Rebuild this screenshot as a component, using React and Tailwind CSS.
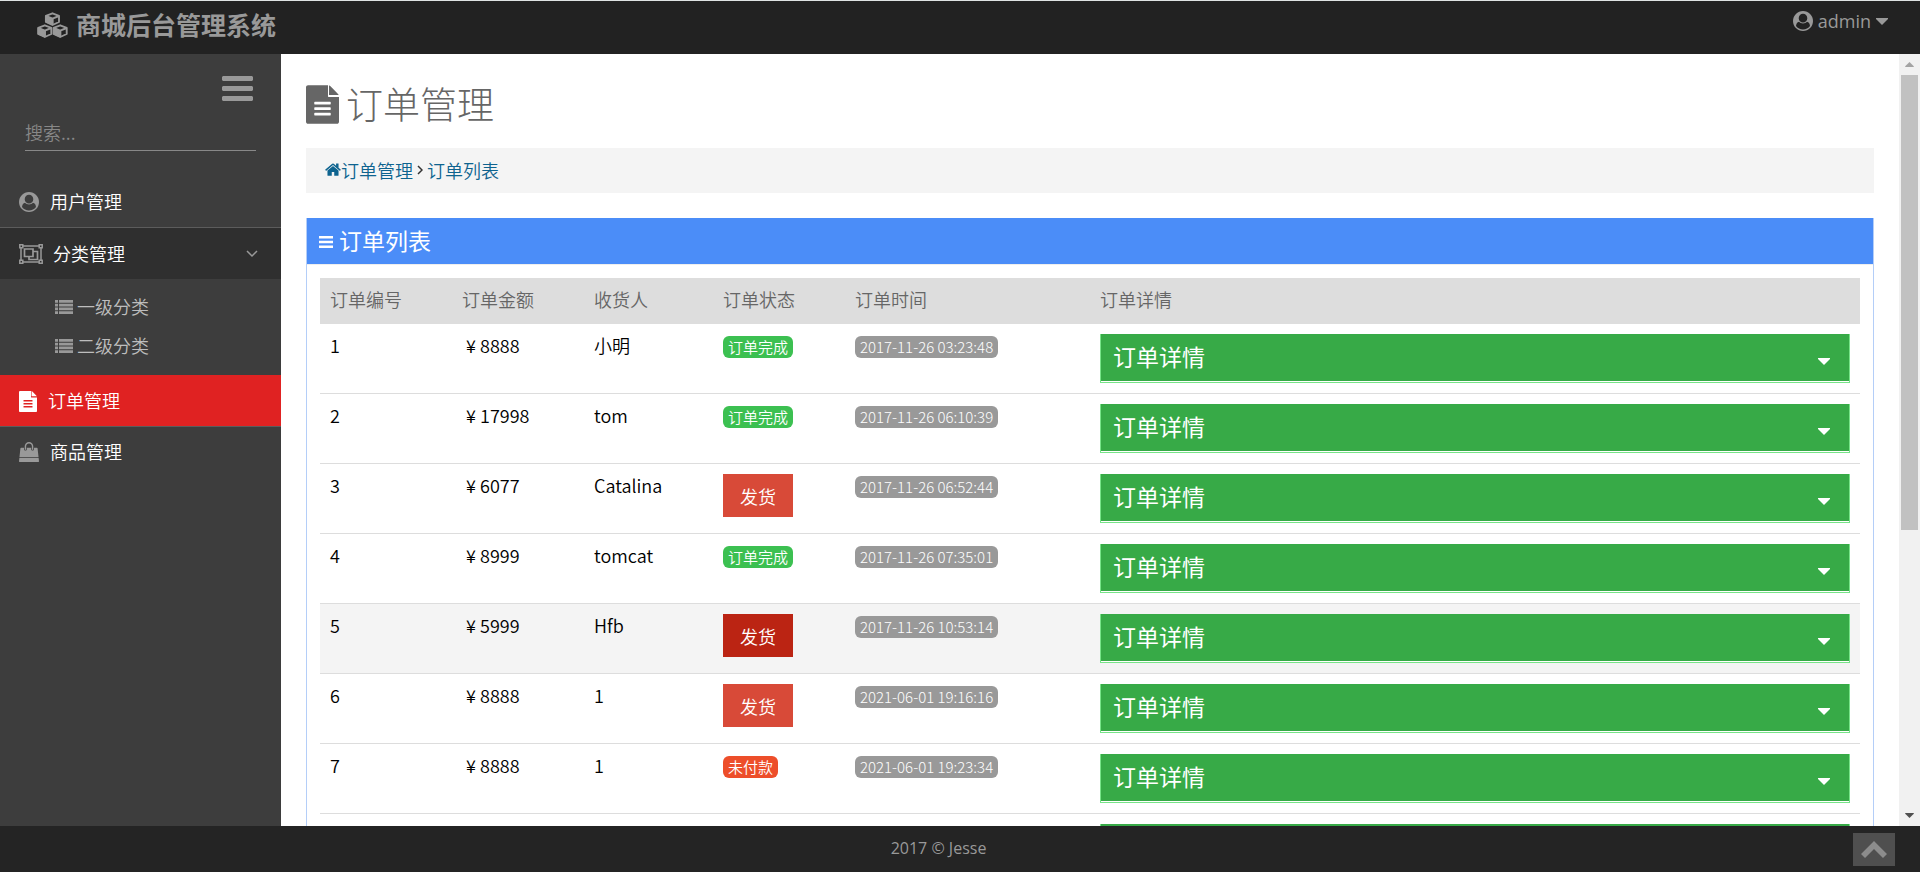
import React from 'react';

const icons = {
  user: {
    box: '0 0 1792 1792',
    d: 'M1523 1339q-22-155-87.5-257.5t-184.5-118.5q-67 74-159.5 115.5t-195.5 41.5-195.5-41.500-159.500-115.500q-119 16-184.500 118.500t-87.500 257.500q106 150 271 237.500t356 87.500 356-87.500 271-237.500zM1280 640q0-159-112.500-271.500t-271.500-112.500-271.500 112.500-112.500 271.500 112.500 271.500 271.500 112.500 271.500-112.500 112.500-271.500zM1792 896q0 182-71 347.500t-190.500 286-285.500 191.500-349 71q-182 0-348-71t-286-191-191-286-71-348 71-348 191-286 286-191 348-71 348 71 286 191 191 286 71 348z',
  },
  file: {
    box: '0 0 1536 1792',
    d: 'M1468 380q37 37 54 68h-450V-2q31 17 68 54zM1024 512q0 14 9 23t23 9h480v1152q0 40-28 68t-68 28H96q-40 0-68-28t-28-68V96q0-40 28-68t68-28h928zM1152 1376v-64q0-14-9-23t-23-9H416q-14 0-23 9t-9 23v64q0 14 9 23t23 9h704q14 0 23-9t9-23zm0-256v-64q0-14-9-23t-23-9H416q-14 0-23 9t-9 23v64q0 14 9 23t23 9h704q14 0 23-9t9-23zm0-256v-64q0-14-9-23t-23-9H416q-14 0-23 9t-9 23v64q0 14 9 23t23 9h704q14 0 23-9t9-23z',
  },
  home: {
    box: '0 0 1664 1312',
    d: 'M1408 768v480q0 26-19 45t-45 19H960V928H704v384H320q-26 0-45-19t-19-45V768q0-1 .5-3t.5-3l575-474 575 474q1 2 1 6zM1631 699l-62 74q-8 9-21 11h-3q-13 0-21-7L832 200 140 777q-12 8-24 7-13-2-21-11l-62-74q-8-10-7-23.500t11-21.500L756 55q32-26 76-26t76 26l244 204V64q0-14 9-23t23-9h192q14 0 23 9t9 23v408l219 182q10 8 11 21.500t-7 23.500z',
  },
  list: {
    box: '0 0 18 14',
    d: 'M0 0h3v2.700H0zM4 0h14v2.700H4zM0 3.800h3v2.700H0zM4 3.800h14v2.700H4zM0 7.500h3v2.700H0zM4 7.500h14v2.700H4zM0 11.300h3V14H0zM4 11.300h14V14H4z',
  },
  lines: { box: '0 0 14 12', d: 'M0 0h14v2.500H0zM0 4.700h14v2.500H0zM0 9.500h14V12H0z' },
  bars: {
    box: '0 0 31 25',
    d: 'M1 0h29l1 1v3l-1 1H1L0 4V1zM1 10h29l1 1v3l-1 1H1l-1-1v-3zM1 20h29l1 1v3l-1 1H1l-1-1v-3z',
  },
  bag: {
    box: '0 0 1792 1792',
    d: 'M1757 1408l35 313q3 28-16 50-19 21-48 21H64q-29 0-48-21-19-22-16-50l35-313zM1664 569l86 775H42l86-775q3-24 21-40.500t43-16.500h256v128q0 53 37.500 90.500t90.500 37.500 90.500-37.500 37.500-90.500V512h384v128q0 53 37.500 90.500t90.500 37.500 90.500-37.500 37.500-90.500V512h256q25 0 43 16.500t21 40.500zM1280 384v256q0 26-19 45t-45 19-45-19-19-45V384q0-106-75-181t-181-75-181 75-75 181v256q0 26-19 45t-45 19-45-19-19-45V384q0-159 112.500-271.500T896 0t271.500 112.500T1280 384z',
  },
  caret: { box: '0 0 12 7', d: 'M0 0h12v1L6 7 0 1z' },
  up: { box: '0 0 26 17', d: 'M13 0l13 13-4 4-9-9-9 9-4-4z' },
};

function Icon({ name, className }) {
  return (
    <svg aria-hidden="true" viewBox={icons[name].box} fill="currentColor" className={`shrink-0 ${className}`}>
      <path d={icons[name].d} />
    </svg>
  );
}

function Cubes() {
  return (
    <svg aria-hidden="true" viewBox="0 0 31 26" className="h-[26px] w-[31px] shrink-0" strokeLinejoin="round">
      {['translate(7.700 .300)', 'translate(0 12.300)', 'translate(15.400 12.300)'].map((t) => (
        <g key={t} transform={t}>
          <path d="M7.800 1L14.300 3.600V9.700L7.800 12.700 1.200 9.700V3.600z" fill="#222" stroke="#999" strokeWidth="1.900" />
          <path d="M1.200 3.800L7.800 6.500v6.200L1.200 9.700z" fill="#999" stroke="#999" />
          <path d="M1.200 3.700L7.800 6.400l6.500-2.700M8 6.400v6.200" fill="none" stroke="#999" strokeWidth="1.900" />
        </g>
      ))}
    </svg>
  );
}

function ObjectGroup() {
  return (
    <svg aria-hidden="true" viewBox="0 0 24 20" fill="none" stroke="currentColor" className="h-5 w-6 shrink-0">
      <path d="M4 2h16M4 18h16M2 4v12M22 4v12" strokeWidth="1.500" />
      <path d="M.8.800h3v3h-3zM20.200.800h3v3h-3zM.8 16.200h3v3h-3zM20.200 16.200h3v3h-3z" strokeWidth="1.500" />
      <path d="M5.500 5h8.500v7.500H5.500zM14.500 7.500H18.500V15.500H10V12.500" strokeWidth="1.700" />
    </svg>
  );
}

const orders = [
  ['1', '8888', '小明', 'done', '2017-11-26 03:23:48'],
  ['2', '17998', 'tom', 'done', '2017-11-26 06:10:39'],
  ['3', '6077', 'Catalina', 'ship', '2017-11-26 06:52:44'],
  ['4', '8999', 'tomcat', 'done', '2017-11-26 07:35:01'],
  ['5', '5999', 'Hfb', 'active', '2017-11-26 10:53:14'],
  ['6', '8888', '1', 'ship', '2021-06-01 19:16:16'],
  ['7', '8888', '1', 'unpaid', '2021-06-01 19:23:34'],
];

const badge = 'mt-[3px] block w-fit rounded-md px-[5px] text-[15px] leading-[22px] text-white';
const cell = 'border-b border-[#ddd] px-[10px] pt-[9px] pb-0 leading-6';

function Status({ kind }) {
  if (kind === 'done') return <span className={`${badge} bg-[#3cc051]`}>订单完成</span>;
  if (kind === 'unpaid') return <span className={`${badge} bg-[#ed4e2a]`}>未付款</span>;
  return (
    <button
      type="button"
      className={`mt-px h-[43px] w-[70px] text-lg text-white ${kind === 'active' ? 'bg-[#bb2413]' : 'bg-[#d84a38]'}`}
    >
      发货
    </button>
  );
}

function Detail({ children, label }) {
  return (
    <div className="mt-px border border-t-0 border-[#77e588]">
      <button
        type="button"
        aria-label={label}
        className="flex h-12 w-full items-center justify-between border-b border-white bg-[#37aa47] pr-[19px] pl-3 text-[23px] leading-none font-normal text-white"
      >
        <span className="pb-0.5">{children}</span>
        <Icon name="caret" className="mt-[7px] h-[7px] w-3" />
      </button>
    </div>
  );
}

function NavItem({ icon, label, className = '' }) {
  return (
    <a href="#" className={`flex h-[51px] items-center gap-[11px] border-t border-[#5c5c5c] pl-[19px] text-lg text-white ${className}`}>
      {icon}
      <span className="pb-0.5">{label}</span>
    </a>
  );
}

export default function App() {
  return (
    <div className="flex h-screen flex-col overflow-hidden bg-white font-['Noto_Sans_CJK_SC',sans-serif] font-[350] text-black">
      <header className="flex h-[54px] shrink-0 items-start justify-between border-t border-[#dfe3e3] bg-[#222] pr-8 pl-[37px] text-[#999]">
        <a href="#" className="flex h-12 items-center gap-2 text-[25px] font-bold">
          <Cubes />
          商城后台管理系统
        </a>
        <button type="button" className="flex h-10 items-center gap-[5px] font-['Open_Sans',sans-serif] text-lg font-normal">
          <Icon name="user" className="h-5 w-5" />
          admin
          <Icon name="caret" className="h-[7px] w-3" />
        </button>
      </header>

      <div className="flex min-h-0 flex-1">
        <aside className="w-[281px] shrink-0 bg-[#3d3d3d]">
          <div className="flex justify-end pt-[22px] pr-7 text-[#999]">
            <button type="button" aria-label="菜单">
              <Icon name="bars" className="h-[25px] w-[31px]" />
            </button>
          </div>
          <div className="px-[25px] pt-4 pb-[25px]">
            <input
              type="text"
              aria-label="搜索"
              placeholder="搜索..."
              className="h-[34px] w-full border-b border-[#888] bg-transparent pb-1 text-lg text-white outline-none placeholder:text-[#888]"
            />
          </div>
          <nav>
            <NavItem icon={<Icon name="user" className="h-5 w-5 text-[#999]" />} label="用户管理" className="border-t-transparent" />
            <a href="#" className="flex h-[52px] items-center gap-[10px] border-t border-[#5c5c5c] bg-[#2f2f2f] pr-[23px] pl-[19px] text-lg text-white">
              <span className="text-[#999]"><ObjectGroup /></span>
              <span className="flex-1 pb-0.5">分类管理</span>
              <svg aria-hidden="true" viewBox="0 0 12 8" fill="none" stroke="#999" strokeWidth="1.500" className="h-2 w-3">
                <path d="M1 1l5 5 5-5" />
              </svg>
            </a>
            <div className="flex flex-col pt-2 pb-[10px]">
              {['一级分类', '二级分类'].map((t) => (
                <a key={t} href="#" className="flex h-[39px] items-center gap-1 pl-[55px] text-lg text-[#bdbdbd]">
                  <Icon name="list" className="h-[14px] w-[18px] text-[#999]" />
                  <span className="pb-0.5">{t}</span>
                </a>
              ))}
            </div>
            <NavItem
              icon={<Icon name="file" className="h-[21px] w-[18px]" />}
              label="订单管理"
              className="border-t-[#e02222] bg-[#e02222]"
            />
            <NavItem icon={<Icon name="bag" className="h-5 w-5 text-[#999]" />} label="商品管理" />
          </nav>
        </aside>

        <main className="min-w-0 flex-1 overflow-hidden px-[25px] pt-[25px]">
          <h1 className="flex h-[51px] items-center gap-[7px] text-[37px] font-light text-[#666]">
            <Icon name="file" className="h-[39px] w-[33px]" />
            <span className="pb-0.5">订单管理</span>
          </h1>
          <nav aria-label="路径" className="mt-[18px] flex h-[45px] items-center bg-[#f4f4f4] px-[19px] pb-0.5 text-lg text-[#0d638f]">
            <a href="#" className="flex items-center">
              <Icon name="home" className="h-[13px] w-4" />
              订单管理
            </a>
            <svg aria-hidden="true" viewBox="0 0 6 10" fill="none" stroke="#333" strokeWidth="1.500" className="mx-1 h-[10px] w-[6px]">
              <path d="M1 1l4 4-4 4" />
            </svg>
            <a href="#">订单列表</a>
          </nav>

          <section className="mt-[25px] border-x border-[#b4cef8]">
            <h2 className="flex h-[47px] items-center gap-[6px] border-b border-[#eee] bg-[#4b8df8] pl-3 text-[23px] font-normal text-white">
              <Icon name="lines" className="mt-0.5 h-3 w-[14px]" />
              <span className="pb-0.5">订单列表</span>
            </h2>
            <div className="px-[13px] py-[13px]">
              <table className="w-full table-fixed border-separate border-spacing-0 text-left text-lg">
                <colgroup>
                  <col className="w-[132px]" />
                  <col className="w-[132px]" />
                  <col className="w-[129px]" />
                  <col className="w-[132px]" />
                  <col className="w-[245px]" />
                  <col />
                </colgroup>
                <thead>
                  <tr className="h-[46px] bg-[#ddd] text-[#666]">
                    {['订单编号', '订单金额', '收货人', '订单状态', '订单时间', '订单详情'].map((t) => (
                      <th key={t} className="px-[10px] pt-0 pb-1 font-[350]">{t}</th>
                    ))}
                  </tr>
                </thead>
                <tbody>
                  {orders.map(([id, price, name, kind, time]) => (
                    <tr key={id} className={`h-[70px] align-top ${kind === 'active' ? 'bg-[#f4f4f4]' : ''}`}>
                      <td className={cell}>{id}</td>
                      <td className={cell}><span className="inline-block w-[18px] text-center">¥</span>{price}</td>
                      <td className={cell}>{name}</td>
                      <td className={cell}><Status kind={kind} /></td>
                      <td className={cell}><span className={`${badge} bg-[#999] font-light`}>{time}</span></td>
                      <td className={cell}><Detail>订单详情</Detail></td>
                    </tr>
                  ))}
                  <tr className="h-[70px] align-top">
                    <td colSpan={5} className={cell} />
                    <td className={cell}><Detail label="订单详情" /></td>
                  </tr>
                </tbody>
              </table>
            </div>
          </section>
        </main>

        <div aria-hidden="true" className="flex w-[21px] shrink-0 flex-col items-center bg-[#f1f1f1]">
          <div className="flex h-[21px] items-center text-[#a3a3a3]">
            <Icon name="caret" className="h-[5px] w-[9px] rotate-180" />
          </div>
          <div className="h-[455px] w-[17px] bg-[#c1c1c1]" />
          <div className="mt-auto flex h-[21px] items-center text-[#505050]">
            <Icon name="caret" className="h-[5px] w-[9px]" />
          </div>
        </div>
      </div>

      <footer className="flex h-[46px] shrink-0 items-center bg-[#242424] pr-[25px] text-[#999]">
        <p className="flex-1 pb-0.5 pl-[24px] text-center font-['Open_Sans',sans-serif] text-base font-normal">2017 © Jesse</p>
        <button type="button" aria-label="回到顶部" className="flex h-[33px] w-[42px] items-center justify-center bg-[#4f4f4f] text-[#8c8c8c]">
          <Icon name="up" className="h-[17px] w-[26px]" />
        </button>
      </footer>
    </div>
  );
}
